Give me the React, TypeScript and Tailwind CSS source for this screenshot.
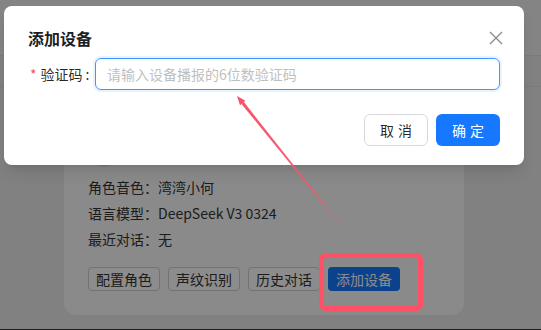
import React from 'react';

const font = { fontFamily: '"Noto Sans CJK SC", "Noto Sans", sans-serif' };

const infoRows = [
  { label: '角色音色：', value: '湾湾小何' },
  { label: '语言模型：', value: 'DeepSeek V3 0324' },
  { label: '最近对话：', value: '无' },
];

const actions = ['配置角色', '声纹识别', '历史对话'];

const App: React.FC = () => {
  return (
    <div className="relative w-[541px] h-[330px] overflow-hidden bg-[#ececec] text-[14px]" style={font}>
      {/* page behind the modal */}
      <div className="h-[56px] border-b border-[#e0e0e0] bg-[#f0f0f0]" />
      <div className="h-[31px] border-b border-[#e0e0e0]" />
      <div className="ml-[64px] mt-[24px] w-[400px] rounded-[12px] bg-[#fbfbfb] px-[24px] pt-[24px] pb-[24px] text-[#333333]">
        <div className="h-[32px] mb-[7px] flex items-center gap-3">
          <div className="w-8 h-8 rounded-full bg-[#e8e8e8]" />
          <span className="font-semibold">小智</span>
        </div>
        {infoRows.map(row => (
          <div key={row.label} className="h-[26px] leading-[26px]">
            {row.label}{row.value}
          </div>
        ))}
        <div className="mt-[15px] flex gap-[8px]">
          {actions.map(a => (
            <button key={a} className="h-[24px] w-[72px] rounded-[4px] border border-[#cfcfcf] bg-white text-[14px] leading-[22px] text-[#333333]">
              {a}
            </button>
          ))}
          <button className="h-[24px] w-[72px] rounded-[4px] bg-[#1677ff] text-[14px] leading-[24px] text-white">
            添加设备
          </button>
        </div>
      </div>
      <div className="absolute left-0 right-0 bottom-0 h-[1px] bg-[#3a3a3a]" />

      {/* mask */}
      <div className="absolute inset-0 bg-black/45" />

      {/* modal */}
      <div className="absolute left-[4px] top-[6px] w-[520px] rounded-[8px] bg-white px-[24px] pt-[20px] pb-[19px] shadow-lg">
        <div className="flex items-center justify-between h-[24px]">
          <h2 className="text-[16px] font-semibold text-black/90">添加设备</h2>
          <svg width="14" height="14" viewBox="0 0 14 14" className="mr-[-3px]">
            <path d="M1 1L13 13M13 1L1 13" stroke="#8c8c8c" strokeWidth="1.4" />
          </svg>
        </div>
        <div className="mt-[8px] flex items-center h-[32px]">
          <label className="flex items-center w-[67px] shrink-0 whitespace-nowrap text-black/85">
            <span className="text-[#ff4d4f] mr-[4px] ml-[2px] text-[14px]">*</span>
            验证码<span className="ml-[3px]">:</span>
          </label>
          <input
            className="flex-1 h-[32px] rounded-[6px] border border-[#4096ff] px-[11px] text-[14px] outline-none placeholder:text-[#bfbfbf] shadow-[0_0_0_2px_rgba(5,145,255,0.1)]"
            placeholder="请输入设备播报的6位数验证码"
            style={font}
          />
        </div>
        <div className="mt-[24px] flex justify-end gap-[8px]">
          <button className="h-[32px] w-[64px] rounded-[6px] border border-[#d9d9d9] bg-white text-black/85 tracking-[4px] pl-[4px]">
            取消
          </button>
          <button className="h-[32px] w-[64px] rounded-[6px] bg-[#1677ff] text-white tracking-[4px] pl-[4px]">
            确定
          </button>
        </div>
      </div>

      {/* annotations */}
      <svg className="absolute inset-0 pointer-events-none" width="541" height="330" viewBox="0 0 541 330">
        <defs>
          <linearGradient id="fade" x1="238" y1="98" x2="347" y2="233" gradientUnits="userSpaceOnUse">
            <stop offset="0" stopColor="#f7536a" stopOpacity="1" />
            <stop offset="0.75" stopColor="#f7536a" stopOpacity="0.9" />
            <stop offset="1" stopColor="#f7536a" stopOpacity="0" />
          </linearGradient>
        </defs>
        <polygon points="237,96 240,105.2 245.4,100.8" fill="#f7536a" />
        <polygon points="241.5,103.9 243.9,102.1 347.2,232.8 346.8,233.2" fill="url(#fade)" />
        <rect x="321.5" y="255.5" width="99" height="53" rx="4" fill="none" stroke="#ff5166" strokeWidth="5" />
      </svg>
    </div>
  );
};

export default App;
